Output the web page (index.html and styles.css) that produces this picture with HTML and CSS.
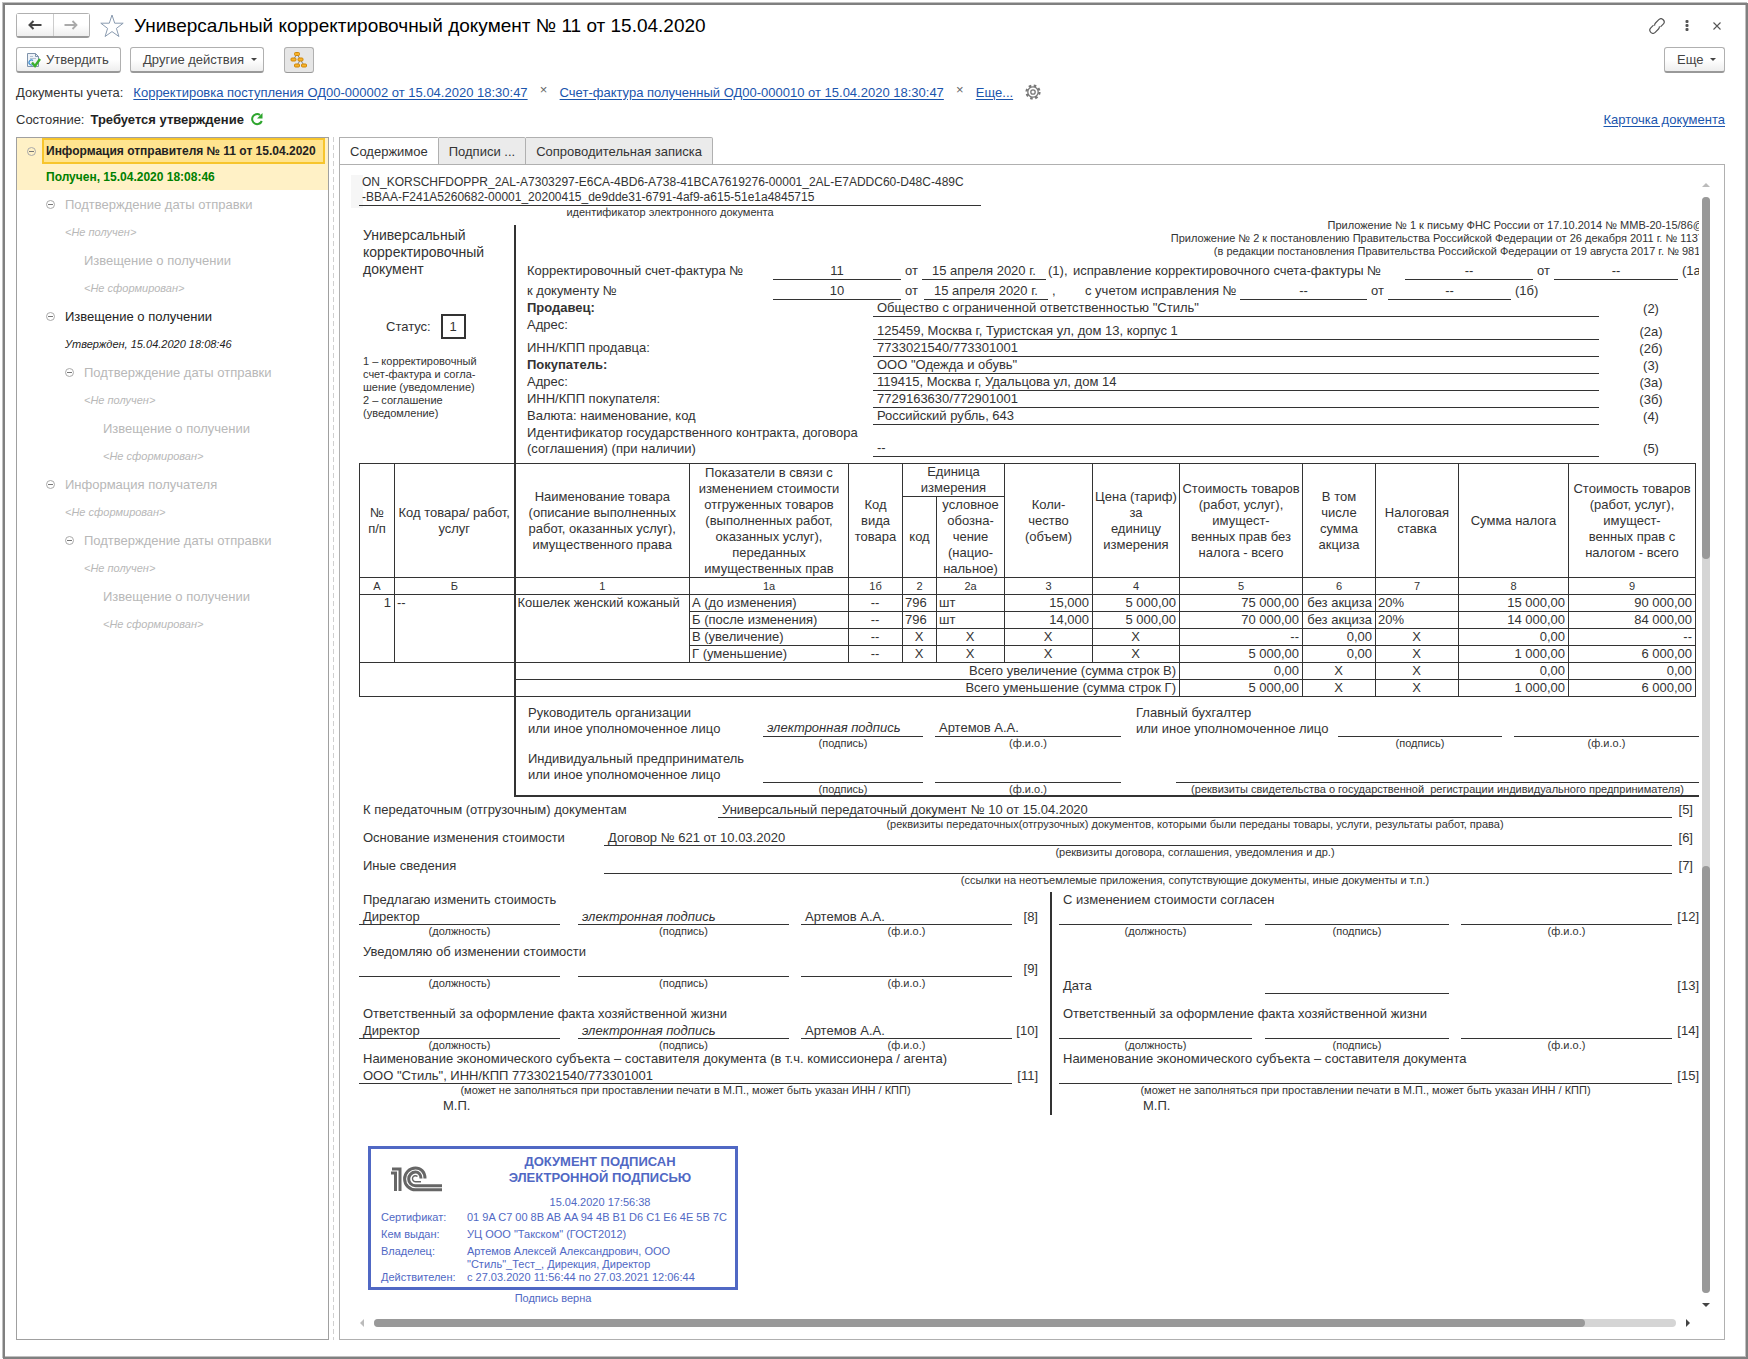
FILE: index.html
```html
<!DOCTYPE html>
<html lang="ru">
<head>
    <meta charset="UTF-8">
    <meta name="viewport" content="width=device-width, initial-scale=1.0">
    <title>Универсальный корректировочный документ № 11 от 15.04.2020</title>
    <link rel="stylesheet" href="styles.css">
</head>
<body>

<div class="window">
    <header class="title-bar">
        <div class="nav-buttons">
            <button type="button" aria-label="Назад">
                <svg width="16" height="12" viewBox="0 0 16 12"><path d="M3 6h11.500M6.500 2L2.500 6l4 4" fill="none" stroke="#444" stroke-width="2"/></svg>
            </button>
            <button type="button" aria-label="Вперед">
                <svg width="16" height="12" viewBox="0 0 16 12"><path d="M1.500 6H13M9.500 2l4 4-4 4" fill="none" stroke="#aaa" stroke-width="1.800"/></svg>
            </button>
        </div>
        <svg class="star" width="24" height="24" viewBox="0 0 24 24"><path d="M12 1l2.700 8.200h8.500l-6.800 5.200 2.500 8.100L12 17.600l-6.900 4.900 2.500-8.100L.8 9.200h8.500z" fill="#fff" stroke="#8a9bb0"/></svg>
        <h1>Универсальный корректировочный документ № 11 от 15.04.2020</h1>
        <div class="window-tools">
            <svg width="16" height="16" viewBox="0 0 16 16" fill="none" stroke="#555" stroke-width="1.200"><path d="M5.700 7.700a3 3 0 0 1 .8-2.700l3.300-3.300a3 3 0 0 1 4.400 4.400L11.500 8.800M10.300 8.300a3 3 0 0 1-.8 2.700l-3.300 3.300a3 3 0 0 1-4.400-4.400L4.500 7.200"/></svg>
            <svg width="16" height="14" viewBox="0 0 16 14" fill="#555"><rect x="6.500" y="1" width="3" height="3" rx="1"/><rect x="6.500" y="5" width="3" height="3" rx="1"/><rect x="6.500" y="9" width="3" height="3" rx="1"/></svg>
            <svg width="16" height="8" viewBox="0 0 16 8"><path d="M4.500.5l7 7M11.500.5l-7 7" stroke="#555" stroke-width="1.100"/></svg>
        </div>
    </header>

    <div class="toolbar">
        <button type="button" class="button confirm">
            <svg width="16" height="16" viewBox="0 0 16 16"><path d="M2.500 1.500h8l3 3v10h-11z" fill="#eef2f7" stroke="#7f93ab"/><path d="M10.500 1.500v3h3" fill="none" stroke="#7f93ab"/><path d="M5 4.500h3M5 6.500h6" stroke="#b4c2d2"/><path d="M8 8.500a2.500 2.500 0 1 0 0 4" fill="none" stroke="#3f8fd0" stroke-width="1.200"/><path d="M7 10.500l3 3.500 5-7" fill="none" stroke="#3bb02f" stroke-width="2.400"/></svg>
            Утвердить
        </button>
        <button type="button" class="button actions">Другие действия <span class="caret"></span></button>
        <button type="button" class="button toggle" aria-label="Структура" aria-pressed="true">
            <svg width="18" height="18" viewBox="0 0 18 18"><path d="M7 3L3.500 8.500M7 3l7 11.500M10.500 8.500L7 14.500" fill="none" stroke="#7c8796"/><g fill="#f7b32b" stroke="#d08708"><rect x="4.500" y="1.500" width="5" height="3" rx="1"/><rect x="1" y="7" width="5" height="3" rx="1"/><rect x="8" y="7" width="5" height="3" rx="1"/><rect x="4.500" y="13" width="5" height="3" rx="1"/><rect x="11.500" y="13" width="5" height="3" rx="1"/></g></svg>
        </button>
        <button type="button" class="button more">Еще <span class="caret"></span></button>
    </div>

    <div class="info-row">
        <span class="info-label">Документы учета:</span>
        <a href="#">Корректировка поступления ОД00-000002 от 15.04.2020 18:30:47</a>
        <button type="button" class="remove" aria-label="Удалить">×</button>
        <a href="#">Счет-фактура полученный ОД00-000010 от 15.04.2020 18:30:47</a>
        <button type="button" class="remove" aria-label="Удалить">×</button>
        <a href="#">Еще...</a>
        <svg class="gear" width="16" height="16" viewBox="0 0 16 16" fill="none" stroke="#777"><circle cx="8" cy="8" r="6.500" stroke-width="2.200" stroke-dasharray="2.600 2.500"/><circle cx="8" cy="8" r="5.200" stroke-width="1.300"/><circle cx="8" cy="8" r="2.200" stroke-width="1.300"/></svg>
    </div>

    <div class="info-row">
        <span>Состояние:</span>
        <strong>Требуется утверждение</strong>
        <svg width="14" height="14" viewBox="0 0 14 14"><path d="M11.800 9A5 5 0 1 1 10 3" fill="none" stroke="#2da52d" stroke-width="2"/><path d="M12.500 1v5.500H7z" fill="#2da52d"/></svg>
        <a class="card-link" href="#">Карточка документа</a>
    </div>

    <main class="workspace">
        <ul class="tree">
            <li class="level1 selected"><button type="button" class="collapse" aria-label="Свернуть"></button><span class="current">Информация отправителя № 11 от 15.04.2020</span></li>
            <li class="level1 selected"><span class="received">Получен, 15.04.2020 18:08:46</span></li>
            <li class="level2"><button type="button" class="collapse" aria-label="Свернуть"></button><span>Подтверждение даты отправки</span></li>
            <li class="level2 status"><span>&lt;Не получен&gt;</span></li>
            <li class="level3"><span>Извещение о получении</span></li>
            <li class="level3 status"><span>&lt;Не сформирован&gt;</span></li>
            <li class="level2 done"><button type="button" class="collapse" aria-label="Свернуть"></button><span>Извещение о получении</span></li>
            <li class="level2 status done"><span>Утвержден, 15.04.2020 18:08:46</span></li>
            <li class="level3"><button type="button" class="collapse" aria-label="Свернуть"></button><span>Подтверждение даты отправки</span></li>
            <li class="level3 status"><span>&lt;Не получен&gt;</span></li>
            <li class="level4"><span>Извещение о получении</span></li>
            <li class="level4 status"><span>&lt;Не сформирован&gt;</span></li>
            <li class="level2"><button type="button" class="collapse" aria-label="Свернуть"></button><span>Информация получателя</span></li>
            <li class="level2 status"><span>&lt;Не сформирован&gt;</span></li>
            <li class="level3"><button type="button" class="collapse" aria-label="Свернуть"></button><span>Подтверждение даты отправки</span></li>
            <li class="level3 status"><span>&lt;Не получен&gt;</span></li>
            <li class="level4"><span>Извещение о получении</span></li>
            <li class="level4 status"><span>&lt;Не сформирован&gt;</span></li>
        </ul>

        <div class="splitter"></div>

        <section class="content">
            <div class="tabs">
                <button type="button" class="tab active">Содержимое</button>
                <button type="button" class="tab">Подписи ...</button>
                <button type="button" class="tab">Сопроводительная записка</button>
            </div>

            <div class="panel">
                <div class="viewport">
                    <div class="doc-id">
                        <p>ON_KORSCHFDOPPR_2AL-A7303297-E6CA-4BD6-A738-41BCA7619276-00001_2AL-E7ADDC60-D48C-489C<br>-BBAA-F241A5260682-00001_20200415_de9dde31-6791-4af9-a615-51e1a4845715</p>
                        <small>идентификатор электронного документа</small>
                    </div>

                    <div class="sheet">
                        <div class="form">
                            <div class="form-side">
                                <h2>Универсальный корректировочный документ</h2>
                                <div class="status-line">Статус: <span class="status-box">1</span></div>
                                <p class="hint">1 – корректировочный<br>счет-фактура и согла-<br>шение (уведомление)<br>2 – соглашение<br>(уведомление)</p>
                            </div>
                            <div class="form-main">
                                <p class="appendix">Приложение № 1 к письму ФНС России от 17.10.2014 № ММВ-20-15/86@<br>Приложение № 2 к постановлению Правительства Российской Федерации от 26 декабря 2011 г. № 1137<br>(в редакции постановления Правительства Российской Федерации от 19 августа 2017 г. № 981)</p>
                                <div class="number-row first">
                                    <span>Корректировочный счет-фактура №</span><span class="line">11</span><span class="word">от</span><span class="line">15 апреля 2020 г.</span><span class="tag">(1),</span><span>исправление корректировочного счета-фактуры №</span><span class="line">--</span><span class="word">от</span><span class="line">--</span><span class="word">(1а)</span>
                                </div>
                                <div class="number-row second">
                                    <span>к документу №</span><span class="line">10</span><span class="word">от</span><span class="line">15 апреля 2020 г.</span><span class="word">,</span><span>с учетом исправления №</span><span class="line">--</span><span class="word">от</span><span class="line">--</span><span class="word">(1б)</span>
                                </div>
                                <div class="party"><b>Продавец:</b><span class="value">Общество с ограниченной ответственностью "Стиль"</span><span>(2)</span></div>
                                <div class="party tall"><span>Адрес:</span><span class="value">125459, Москва г, Туристская ул, дом 13, корпус 1</span><span>(2а)</span></div>
                                <div class="party"><span>ИНН/КПП продавца:</span><span class="value">7733021540/773301001</span><span>(2б)</span></div>
                                <div class="party"><b>Покупатель:</b><span class="value">ООО "Одежда и обувь"</span><span>(3)</span></div>
                                <div class="party"><span>Адрес:</span><span class="value">119415, Москва г, Удальцова ул, дом 14</span><span>(3а)</span></div>
                                <div class="party"><span>ИНН/КПП покупателя:</span><span class="value">7729163630/772901001</span><span>(3б)</span></div>
                                <div class="party"><span>Валюта: наименование, код</span><span class="value">Российский рубль, 643</span><span>(4)</span></div>
                                <div class="party"><span>Идентификатор государственного контракта, договора<br>(соглашения) (при наличии)</span><span class="value">--</span><span>(5)</span></div>
                            </div>
                        </div>

                        <table class="goods">
                            <colgroup>
                                <col style="width:35px"><col style="width:120px"><col style="width:175px"><col style="width:159px"><col style="width:54px"><col style="width:34px"><col style="width:68px"><col style="width:88px"><col style="width:87px"><col style="width:123px"><col style="width:73px"><col style="width:83px"><col style="width:110px"><col style="width:127px">
                            </colgroup>
                            <thead>
                                <tr class="head-top">
                                    <th rowspan="2">№<br>п/п</th>
                                    <th rowspan="2">Код товара/ работ,<br>услуг</th>
                                    <th rowspan="2" class="thick">Наименование товара<br>(описание выполненных<br>работ, оказанных услуг),<br>имущественного права</th>
                                    <th rowspan="2">Показатели в связи с<br>изменением стоимости<br>отгруженных товаров<br>(выполненных работ,<br>оказанных услуг),<br>переданных<br>имущественных прав</th>
                                    <th rowspan="2">Код<br>вида<br>товара</th>
                                    <th colspan="2">Единица<br>измерения</th>
                                    <th rowspan="2">Коли-<br>чество<br>(объем)</th>
                                    <th rowspan="2">Цена (тариф)<br>за<br>единицу<br>измерения</th>
                                    <th rowspan="2">Стоимость товаров<br>(работ, услуг),<br>имущест-<br>венных прав без<br>налога - всего</th>
                                    <th rowspan="2">В том<br>числе<br>сумма<br>акциза</th>
                                    <th rowspan="2">Налоговая<br>ставка</th>
                                    <th rowspan="2">Сумма налога</th>
                                    <th rowspan="2">Стоимость товаров<br>(работ, услуг),<br>имущест-<br>венных прав с<br>налогом - всего</th>
                                </tr>
                                <tr class="head-sub">
                                    <th>код</th>
                                    <th>условное<br>обозна-<br>чение<br>(нацио-<br>нальное)</th>
                                </tr>
                                <tr class="numbers">
                                    <th>А</th><th>Б</th><th class="thick">1</th><th>1а</th><th>1б</th><th>2</th><th>2а</th><th>3</th><th>4</th><th>5</th><th>6</th><th>7</th><th>8</th><th>9</th>
                                </tr>
                            </thead>
                            <tbody>
                                <tr>
                                    <td rowspan="4" class="num">1</td><td rowspan="4">--</td><td rowspan="4" class="thick">Кошелек женский кожаный</td>
                                    <td>А (до изменения)</td><td class="mid">--</td><td>796</td><td>шт</td><td class="num">15,000</td><td class="num">5 000,00</td><td class="num">75 000,00</td><td class="num">без акциза</td><td>20%</td><td class="num">15 000,00</td><td class="num">90 000,00</td>
                                </tr>
                                <tr>
                                    <td>Б (после изменения)</td><td class="mid">--</td><td>796</td><td>шт</td><td class="num">14,000</td><td class="num">5 000,00</td><td class="num">70 000,00</td><td class="num">без акциза</td><td>20%</td><td class="num">14 000,00</td><td class="num">84 000,00</td>
                                </tr>
                                <tr>
                                    <td>В (увеличение)</td><td class="mid">--</td><td class="mid">Х</td><td class="mid">Х</td><td class="mid">Х</td><td class="mid">Х</td><td class="num">--</td><td class="num">0,00</td><td class="mid">Х</td><td class="num">0,00</td><td class="num">--</td>
                                </tr>
                                <tr>
                                    <td>Г (уменьшение)</td><td class="mid">--</td><td class="mid">Х</td><td class="mid">Х</td><td class="mid">Х</td><td class="mid">Х</td><td class="num">5 000,00</td><td class="num">0,00</td><td class="mid">Х</td><td class="num">1 000,00</td><td class="num">6 000,00</td>
                                </tr>
                                <tr>
                                    <td rowspan="2" colspan="2"></td><td colspan="7" class="thick num">Всего увеличение (сумма строк В)</td><td class="num">0,00</td><td class="mid">Х</td><td class="mid">Х</td><td class="num">0,00</td><td class="num">0,00</td>
                                </tr>
                                <tr>
                                    <td colspan="7" class="thick num">Всего уменьшение (сумма строк Г)</td><td class="num">5 000,00</td><td class="mid">Х</td><td class="mid">Х</td><td class="num">1 000,00</td><td class="num">6 000,00</td>
                                </tr>
                            </tbody>
                        </table>

                        <div class="heads">
                            <div class="heads-row">
                                <span>Руководитель организации<br>или иное уполномоченное лицо</span>
                                <span class="sign"><i>электронная подпись</i></span>
                                <span class="sign">Артемов А.А.</span>
                                <span class="accountant">Главный бухгалтер<br>или иное уполномоченное лицо</span>
                                <span class="sign"></span>
                                <span class="sign"></span>
                                <small></small><small>(подпись)</small><small>(ф.и.о.)</small><small></small><small>(подпись)</small><small>(ф.и.о.)</small>
                            </div>
                            <div class="heads-row">
                                <span>Индивидуальный предприниматель<br>или иное уполномоченное лицо</span>
                                <span class="sign"></span>
                                <span class="sign"></span>
                                <span class="sign wide"></span>
                                <small></small><small>(подпись)</small><small>(ф.и.о.)</small><small class="wide">(реквизиты свидетельства о государственной&nbsp; регистрации индивидуального предпринимателя)</small>
                            </div>
                        </div>

                        <div class="refs">
                            <div class="ref far"><span>К передаточным (отгрузочным) документам</span><span class="value">Универсальный передаточный документ № 10 от 15.04.2020</span><span class="mark">[5]</span></div>
                            <small>(реквизиты передаточных(отгрузочных) документов, которыми были переданы товары, услуги, результаты работ, права)</small>
                            <div class="ref"><span>Основание изменения стоимости</span><span class="value">Договор № 621 от 10.03.2020</span><span class="mark">[6]</span></div>
                            <small>(реквизиты договора, соглашения, уведомления и др.)</small>
                            <div class="ref"><span>Иные сведения</span><span class="value"></span><span class="mark">[7]</span></div>
                            <small>(ссылки на неотъемлемые приложения, сопутствующие документы, иные документы и т.п.)</small>
                        </div>

                        <div class="halves">
                            <div class="half seller">
                                <p>Предлагаю изменить стоимость</p>
                                <div class="signs"><span class="sign">Директор</span><span class="sign"><i>электронная подпись</i></span><span class="sign">Артемов А.А.</span><span class="mark">[8]</span></div>
                                <div class="signs captions"><small>(должность)</small><small>(подпись)</small><small>(ф.и.о.)</small></div>
                                <p class="notify">Уведомляю об изменении стоимости</p>
                                <div class="signs"><span class="sign"></span><span class="sign"></span><span class="sign"></span><span class="mark">[9]</span></div>
                                <div class="signs captions"><small>(должность)</small><small>(подпись)</small><small>(ф.и.о.)</small></div>
                                <p class="responsible">Ответственный за оформление факта хозяйственной жизни</p>
                                <div class="signs"><span class="sign">Директор</span><span class="sign"><i>электронная подпись</i></span><span class="sign">Артемов А.А.</span><span class="mark">[10]</span></div>
                                <div class="signs captions"><small>(должность)</small><small>(подпись)</small><small>(ф.и.о.)</small></div>
                                <p>Наименование экономического субъекта – составителя документа (в т.ч. комиссионера / агента)</p>
                                <div class="signs"><span class="sign full">ООО "Стиль", ИНН/КПП 7733021540/773301001</span><span class="mark">[11]</span></div>
                                <div class="signs captions"><small class="full">(может не заполняться при проставлении печати в М.П., может быть указан ИНН / КПП)</small></div>
                                <p class="seal">М.П.</p>
                            </div>
                            <div class="half buyer">
                                <p>С изменением стоимости согласен</p>
                                <div class="signs"><span class="sign"></span><span class="sign"></span><span class="sign"></span><span class="mark">[12]</span></div>
                                <div class="signs captions"><small>(должность)</small><small>(подпись)</small><small>(ф.и.о.)</small></div>
                                <div class="signs date"><span>Дата</span><span class="sign"></span><span></span><span class="mark">[13]</span></div>
                                <p>Ответственный за оформление факта хозяйственной жизни</p>
                                <div class="signs"><span class="sign"></span><span class="sign"></span><span class="sign"></span><span class="mark">[14]</span></div>
                                <div class="signs captions"><small>(должность)</small><small>(подпись)</small><small>(ф.и.о.)</small></div>
                                <p>Наименование экономического субъекта – составителя документа</p>
                                <div class="signs"><span class="sign full"></span><span class="mark">[15]</span></div>
                                <div class="signs captions"><small class="full">(может не заполняться при проставлении печати в М.П., может быть указан ИНН / КПП)</small></div>
                                <p class="seal">М.П.</p>
                            </div>
                        </div>

                        <div class="stamp">
                            <div class="stamp-box">
                                <div class="stamp-head">
                                    <svg width="52" height="26" viewBox="0 0 52 26" fill="none" stroke="#666" stroke-width="3"><path d="M0 7h4.500V25M1 3h8V25"/><path d="M34 12.500C34 5.500 29.500 2 24.500 2a10.900 10.900 0 0 0 0 21.800H51"/><path d="M30 12.500c0-4-2.500-6.400-5.500-6.400a6.800 6.800 0 0 0 0 13.600H51"/><path d="M26.500 10.500a3 3 0 1 0-2 5.200H30" stroke-width="1.400"/></svg>
                                    <strong>ДОКУМЕНТ ПОДПИСАН<br>ЭЛЕКТРОННОЙ ПОДПИСЬЮ</strong>
                                </div>
                                <p>15.04.2020 17:56:38</p>
                                <dl>
                                    <dt>Сертификат:</dt><dd>01 9A C7 00 8B AB AA 94 4B B1 D6 C1 E6 4E 5B 7C</dd>
                                    <dt>Кем выдан:</dt><dd>УЦ ООО "Такском" (ГОСТ2012)</dd>
                                    <dt>Владелец:</dt><dd class="tight">Артемов Алексей Александрович, ООО<br>"Стиль"_Тест_, Дирекция, Директор</dd>
                                    <dt>Действителен:</dt><dd>с 27.03.2020 11:56:44 по 27.03.2021 12:06:44</dd>
                                </dl>
                            </div>
                            <div class="verdict">Подпись верна</div>
                        </div>
                    </div>
                </div>

                <div class="scroll vertical">
                    <span class="arrow up"></span>
                    <div class="track"><span class="thumb top"></span><span class="thumb bottom"></span></div>
                    <span class="arrow down"></span>
                </div>
                <div class="scroll horizontal">
                    <span class="arrow left"></span>
                    <div class="track"><span class="thumb"></span></div>
                    <span class="arrow right"></span>
                </div>
            </div>
        </section>
    </main>
</div>

</body>
</html>
```
FILE: styles.css
```css
* {
    box-sizing: border-box;
}

body {
    font-family: "Liberation Sans", Arial, sans-serif;
    font-size: 13px;
    color: #333;
    background-color: #fff;
    margin: 0;
    padding: 3px 0 0 3px;
}

h1, h2, p, ul, dl, dd {
    margin: 0;
    padding: 0;
}

button {
    font: inherit;
    color: inherit;
    cursor: pointer;
}

a {
    color: #1b55ad;
    text-underline-offset: 2px;
}

.window {
    display: flex;
    flex-direction: column;
    min-height: calc(100vh - 3px);
    border: 2px solid #808080;
    box-shadow: -1px -1px 0 #c0c0c0, inset -1px -1px 0 #c0c0c0;
    padding: 8px 21px 17px 11px;
}

/* Title bar */
.title-bar {
    display: flex;
    align-items: center;
    height: 25px;
}

.nav-buttons {
    display: flex;
    width: 74px;
    height: 25px;
    border: 1px solid #b0b0b0;
    border-bottom: 2px solid #999;
    border-radius: 3px;
}

.nav-buttons button {
    flex: 1;
    display: flex;
    align-items: center;
    justify-content: center;
    padding: 0;
    border: none;
    background: linear-gradient(#fff 50%, #eee);
}

.nav-buttons button + button {
    border-left: 1px solid #ccc;
}

.star {
    margin: 0 10px;
}

h1 {
    font-size: 19px;
    font-weight: normal;
    line-height: 24px;
    color: #000;
    white-space: nowrap;
}

.window-tools {
    display: flex;
    align-items: center;
    gap: 14px;
    margin-left: auto;
}

/* Command bar */
.toolbar {
    display: flex;
    margin-top: 9px;
}

.button {
    display: flex;
    align-items: center;
    gap: 7px;
    height: 26px;
    padding: 0 0 0 12px;
    border: 1px solid #b0b0b0;
    border-bottom: 2px solid #999;
    border-radius: 3px;
    background: linear-gradient(#fff 50%, #eee);
    color: #444;
    white-space: nowrap;
}

.button.confirm {
    width: 105px;
    gap: 5px;
    padding-left: 8px;
}

.button.actions {
    width: 134px;
    margin: 0 20px 0 9px;
}

.button.toggle {
    width: 30px;
    justify-content: center;
    padding: 0;
    background: #e6e6e6;
    border-bottom-width: 1px;
}

.button.more {
    width: 61px;
    margin-left: auto;
}

.caret {
    border: 3px solid transparent;
    border-top-color: #444;
    border-bottom: none;
}

/* Links and state */
.info-row {
    display: flex;
    align-items: center;
    gap: 6px;
    height: 22px;
    margin-top: 8px;
    white-space: nowrap;
}

.info-row + .info-row {
    margin-top: 5px;
}

.info-label {
    margin-right: 4px;
}

.remove {
    width: 20px;
    padding: 0 0 4px;
    border: none;
    background: none;
    color: #666;
    line-height: 12px;
}

.gear {
    margin-left: 6px;
}

.info-row strong {
    color: #222;
}

.card-link {
    margin-left: auto;
}

/* Workspace */
.workspace {
    flex: 1;
    display: grid;
    grid-template-columns: 313px 10px 1fr;
    margin-top: 7px;
}

.tree {
    list-style: none;
    border: 1px solid #a0a0a0;
    color: #b8b8b8;
}

.tree li {
    display: flex;
    align-items: center;
    height: 28px;
    white-space: nowrap;
}

.tree .level1 {
    height: 26px;
    padding-left: 29px;
    background-color: #fff1c6;
}

.tree .level2 {
    padding-left: 48px;
}

.tree .level3 {
    padding-left: 67px;
}

.tree .level4 {
    padding-left: 86px;
}

.tree .status {
    font-size: 11px;
    font-style: italic;
}

.tree .done {
    color: #222;
}

.tree .current {
    flex: 1;
    height: 26px;
    margin: 0 3px 0 -4px;
    padding: 0 2px;
    border: 2px solid #f7c52c;
    background-color: #ffe48f;
    color: #222;
    font-size: 12px;
    font-weight: bold;
    line-height: 22px;
}

.tree .received {
    color: #008000;
    font-size: 12px;
    font-weight: bold;
}

.collapse {
    position: relative;
    width: 9px;
    height: 9px;
    margin: 0 10px 0 -19px;
    padding: 0;
    border: 1px solid #aaa;
    border-radius: 50%;
    background: none;
}

.collapse::before {
    content: "";
    position: absolute;
    top: 3px;
    left: 1px;
    width: 5px;
    height: 1px;
    background-color: #777;
}

.splitter {
    width: 1px;
    margin-left: 4px;
    background: repeating-linear-gradient(#d0d0d0 0 5px, transparent 5px 8px);
}

/* Tabs */
.content {
    display: flex;
    flex-direction: column;
    min-width: 0;
}

.tabs {
    display: flex;
    height: 28px;
    margin-bottom: -1px;
}

.tab {
    padding: 0 10px;
    border: 1px solid #b0b0b0;
    border-left: none;
    background-color: #ebebeb;
    border-radius: 0 2px 0 0;
    white-space: nowrap;
}

.tab.active {
    border-left: 1px solid #b0b0b0;
    border-bottom-color: #fff;
    background-color: #fff;
}

.panel {
    flex: 1;
    display: grid;
    grid-template-columns: minmax(0, 1fr) 8px;
    grid-template-rows: 1fr 8px;
    gap: 9px 3px;
    padding: 10px 14px 12px 11px;
    border: 1px solid #b0b0b0;
}

.viewport {
    overflow: hidden;
}

.sheet {
    padding-left: 8px;
}

small {
    font-size: 11px;
    line-height: 12px;
    text-align: center;
    white-space: nowrap;
}

/* Document identifier */
.doc-id {
    display: flex;
    flex-direction: column;
    width: 630px;
    padding-left: 8px;
    background: linear-gradient(#f6f6f6, #f6f6f6) 0 0 / 12px 33px no-repeat;
}

.doc-id p {
    padding-left: 3px;
    border-bottom: 1px solid #333;
    font-size: 12px;
    line-height: 15px;
    white-space: nowrap;
}

.doc-id small {
    margin-bottom: 7px;
}

/* Header form */
.form {
    display: grid;
    grid-template-columns: 155px minmax(0, 1fr);
}

.form-side {
    padding: 2px 0 0 4px;
}

h2 {
    width: 140px;
    font-size: 14px;
    font-weight: normal;
    line-height: 17px;
}

.status-line {
    display: flex;
    align-items: center;
    gap: 10px;
    margin: 36px 0 16px 23px;
}

.status-box {
    width: 25px;
    border: 2px solid #333;
    line-height: 21px;
    text-align: center;
}

.hint {
    font-size: 11px;
    line-height: 13px;
    white-space: nowrap;
}

.form-main {
    padding: 0 0 6px 11px;
    border-left: 2px solid #333;
}

.appendix {
    margin: -6px -5px 5px 0;
    font-size: 11px;
    line-height: 13px;
    text-align: right;
    white-space: nowrap;
}

.number-row {
    display: grid;
    line-height: 16px;
    white-space: nowrap;
}

.number-row.first {
    grid-template-columns: 246px 128px 21px 124px 27px 1fr 128px 21px 124px 21px;
    margin-bottom: 3px;
}

.number-row.second {
    grid-template-columns: 246px 128px 23px 124px 37px 155px 127px 21px 123px 1fr;
}

.number-row .line {
    border-bottom: 1px solid #333;
    text-align: center;
}

.number-row .word {
    padding-left: 4px;
}

.number-row .tag {
    padding-left: 2px;
}

.party {
    display: grid;
    grid-template-columns: 346px 1fr 100px;
    line-height: 16px;
}

.party.tall {
    height: 23px;
}

.party > :last-child {
    align-self: end;
    padding-left: 4px;
    text-align: center;
}

.party .value {
    display: flex;
    align-items: flex-end;
}

.value {
    padding-left: 4px;
    border-bottom: 1px solid #333;
}

/* Goods table */
.goods {
    width: calc(100% - 3px);
    border-collapse: collapse;
    table-layout: fixed;
    line-height: 16px;
}

.goods th,
.goods td {
    height: 17px;
    padding: 0 3px 0 2px;
    border: 1px solid #333;
    font-weight: normal;
    vertical-align: top;
    white-space: nowrap;
}

.goods th {
    padding: 0;
    vertical-align: middle;
}

.goods .head-top th {
    height: 33px;
}

.goods .head-sub th {
    height: 81px;
}

.goods .numbers th {
    height: 17px;
    font-size: 11px;
}

.goods .thick {
    border-left: 2px solid #333;
}

.goods .num {
    text-align: right;
}

.goods .mid {
    text-align: center;
}

/* Signatures of the heads */
.heads {
    margin-left: 155px;
    padding: 8px 0 0 12px;
    border-left: 2px solid #333;
    border-bottom: 2px solid #333;
    line-height: 16px;
}

.heads-row {
    display: grid;
    grid-template-columns: 223px 160px 186px 193px 164px 1fr;
    column-gap: 12px;
    white-space: nowrap;
}

.heads-row + .heads-row {
    margin-top: 2px;
}

.accountant {
    padding-left: 3px;
}

.sign {
    display: flex;
    align-items: flex-end;
    padding-left: 4px;
    border-bottom: 1px solid #333;
}

.wide {
    grid-column: span 3;
    margin-left: 43px;
}

/* References */
.refs {
    display: flex;
    flex-direction: column;
    margin: 6px 0 5px;
}

.ref {
    display: grid;
    grid-template-columns: 245px 1fr 27px;
    height: 15px;
    line-height: 13px;
}

.ref.far {
    grid-template-columns: 359px 1fr 27px;
}

.ref > :first-child {
    padding-left: 4px;
}

.refs small {
    margin: 0 27px 0 359px;
    line-height: 13px;
}

.mark {
    text-align: right;
}

.ref .mark {
    padding-right: 6px;
}

/* Seller and buyer halves */
.halves {
    display: grid;
    grid-template-columns: 691px 1fr;
    line-height: 15px;
}

.half p {
    padding-left: 4px;
    line-height: 16px;
    padding-bottom: 1px;
    white-space: nowrap;
}

.buyer {
    padding-left: 7px;
    border-left: 2px solid #333;
}

.signs {
    display: grid;
    height: 16px;
}

.signs.captions {
    height: 12px;
}

.seller .signs {
    grid-template-columns: 219px 223px 211px 26px;
}

.buyer .signs {
    grid-template-columns: 206px 196px 1fr 27px;
}

.signs > :nth-child(2):not(.mark) {
    margin-right: 12px;
}

.seller .signs > :first-child {
    margin-right: 18px;
}

.buyer .signs > :first-child {
    margin-right: 13px;
}

.signs > .full:first-child {
    grid-column: span 3;
    margin-right: 0;
}

.half .notify {
    margin-top: 7px;
}

.half .responsible {
    margin-top: 17px;
}

.signs.date {
    margin: 41px 0 12px;
}

.date > :first-child {
    padding-left: 4px;
}

.half .seal {
    margin-top: 2px;
    padding-left: 84px;
}

/* Signature stamp */
.stamp {
    width: 370px;
    margin: 31px 0 0 9px;
    color: #5068c4;
    font-size: 11px;
    line-height: 13px;
}

.stamp-box {
    padding: 5px 0 3px;
    border: 3px solid #5068c4;
}

.stamp-head {
    display: grid;
    grid-template-columns: 94px 1fr;
    text-align: center;
}

.stamp-head svg {
    margin: 12px 0 0 20px;
}

.stamp-head strong {
    font-size: 13px;
    line-height: 16px;
}

.stamp-box p {
    padding-left: 94px;
    text-align: center;
    margin: 4px 0 2px;
}

.stamp-box dl {
    display: grid;
    grid-template-columns: 86px 1fr;
    padding-left: 10px;
}

.stamp-box dd {
    margin-bottom: 4px;
    white-space: nowrap;
}

.stamp-box dd.tight,
.stamp-box dd:last-child {
    margin-bottom: 0;
}

.verdict {
    line-height: 16px;
    text-align: center;
}

/* Scroll bars */
.scroll {
    display: flex;
    align-items: center;
    gap: 10px;
}

.vertical {
    flex-direction: column;
    padding: 8px 0 3px;
}

.horizontal {
    padding: 0 9px;
}

.track {
    flex: 1;
    display: flex;
    border-radius: 4px;
    background-color: #d5d5d5;
}

.vertical .track {
    width: 8px;
    flex-direction: column;
    justify-content: space-between;
}

.horizontal .track {
    height: 8px;
}

.thumb {
    width: 93%;
    border-radius: 4px;
    background-color: #999;
}

.vertical .thumb {
    width: 8px;
    height: 33%;
}

.vertical .thumb.bottom {
    height: 39%;
}

.arrow {
    border: 4px solid transparent;
}

.arrow.up {
    border-top: none;
    border-bottom-color: #bbb;
}

.arrow.down {
    border-bottom: none;
    border-top-color: #444;
}

.arrow.left {
    border-left: none;
    border-right-color: #bbb;
}

.arrow.right {
    border-right: none;
    border-left-color: #444;
}
```
